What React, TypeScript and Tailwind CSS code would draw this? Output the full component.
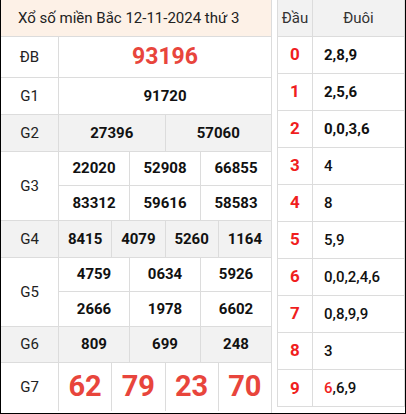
import React from 'react';

type Prize = {
  label: string;
  rows: string[][];
  height: string; // per sub-row height class
  gray?: boolean;
  kind?: 'db' | 'g7';
};

const prizes: Prize[] = [
  { label: 'ĐB', rows: [['93196']], height: 'h-[40px]', kind: 'db' },
  { label: 'G1', rows: [['91720']], height: 'h-[36px]' },
  { label: 'G2', rows: [['27396', '57060']], height: 'h-[36px]', gray: true },
  { label: 'G3', rows: [['22020', '52908', '66855'], ['83312', '59616', '58583']], height: 'h-[34px]' },
  { label: 'G4', rows: [['8415', '4079', '5260', '1164']], height: 'h-[36px]', gray: true },
  { label: 'G5', rows: [['4759', '0634', '5926'], ['2666', '1978', '6602']], height: 'h-[34px]' },
  { label: 'G6', rows: [['809', '699', '248']], height: 'h-[35px]', gray: true },
  { label: 'G7', rows: [['62', '79', '23', '70']], height: 'h-[48px]', kind: 'g7' },
];

// đầu -> đuôi, first digit of the last row is the special prize tail (red)
const loto: { head: string; tails: React.ReactNode; bold?: boolean }[] = [
  { head: '0', tails: '2,8,9', bold: true },
  { head: '1', tails: '2,5,6', bold: true },
  { head: '2', tails: '0,0,3,6', bold: true },
  { head: '3', tails: '4' },
  { head: '4', tails: '8' },
  { head: '5', tails: '5,9' },
  { head: '6', tails: '0,0,2,4,6' },
  { head: '7', tails: '0,8,9,9' },
  { head: '8', tails: '3' },
  {
    head: '9',
    tails: (
      <>
        <span className="text-[#f01e1e]">6</span>,6,9
      </>
    ),
  },
];

function PrizeRow({ prize, last }: { prize: Prize; last: boolean }) {
  const numClass =
    prize.kind === 'db'
      ? 'text-[23px] font-bold text-[#e8453c]'
      : prize.kind === 'g7'
        ? 'text-[29px] font-bold text-[#e8453c]'
        : 'text-[15px] font-bold text-[#111]';

  return (
    <div className={`flex ${last ? '' : 'border-b border-[#dcdcdc]'} ${prize.gray ? 'bg-[#f2f2f2]' : 'bg-white'}`}>
      <div className="w-[58px] shrink-0 flex items-center justify-center border-r border-[#dcdcdc] text-[15px] text-[#222]">
        {prize.label}
      </div>
      <div className="flex-1 flex flex-col">
        {prize.rows.map((row, ri) => (
          <div
            key={ri}
            className={`flex ${prize.height} ${ri < prize.rows.length - 1 ? 'border-b border-[#dcdcdc]' : ''}`}
          >
            {row.map((n, ci) => (
              <div
                key={ci}
                className={`flex-1 flex items-center justify-center ${numClass} ${
                  ci < row.length - 1 ? 'border-r border-[#dcdcdc]' : ''
                }`}
              >
                {n}
              </div>
            ))}
          </div>
        ))}
      </div>
    </div>
  );
}

export default function App() {
  return (
    <div
      className="w-[406px] h-[414px] flex gap-[5px] bg-white border-l border-r border-b border-black"
      style={{ fontFamily: 'Roboto, "Liberation Sans", sans-serif' }}
    >
      {/* Results table */}
      <div className="w-[271px] h-[413px] flex flex-col border-r border-[#dcdcdc]">
        <div className="h-[37px] shrink-0 flex items-center pl-[17px] bg-[#fdf1e7] border-b border-[#dcdcdc] text-[15px] text-[#222]">
          Xổ số miền Bắc 12-11-2024 thứ 3
        </div>
        {prizes.map((p, i) => (
          <PrizeRow key={p.label} prize={p} last={i === prizes.length - 1} />
        ))}
      </div>

      {/* Loto head / tail table */}
      <div className="w-[128px] h-[407px] flex flex-col border-l border-r border-b border-[#dcdcdc]">
        <div className="h-[37px] shrink-0 flex bg-[#f2f2f2] border-b border-[#dcdcdc] text-[15px] text-[#333]">
          <div className="w-[35px] flex items-center justify-center border-r border-[#dcdcdc]">Đầu</div>
          <div className="flex-1 flex items-center justify-center">Đuôi</div>
        </div>
        {loto.map((r, i) => (
          <div
            key={r.head}
            className={`h-[37px] shrink-0 flex ${i < loto.length - 1 ? 'border-b border-[#dcdcdc]' : ''}`}
          >
            <div className="w-[35px] flex items-center justify-center border-r border-[#dcdcdc] text-[17px] font-bold text-[#f01e1e]">
              {r.head}
            </div>
            <div
              className={`flex-1 flex items-center pl-[11px] text-[15px] text-[#111] ${
                r.bold ? 'font-bold' : 'font-medium'
              }`}
            >
              {r.tails}
            </div>
          </div>
        ))}
      </div>
    </div>
  );
}
